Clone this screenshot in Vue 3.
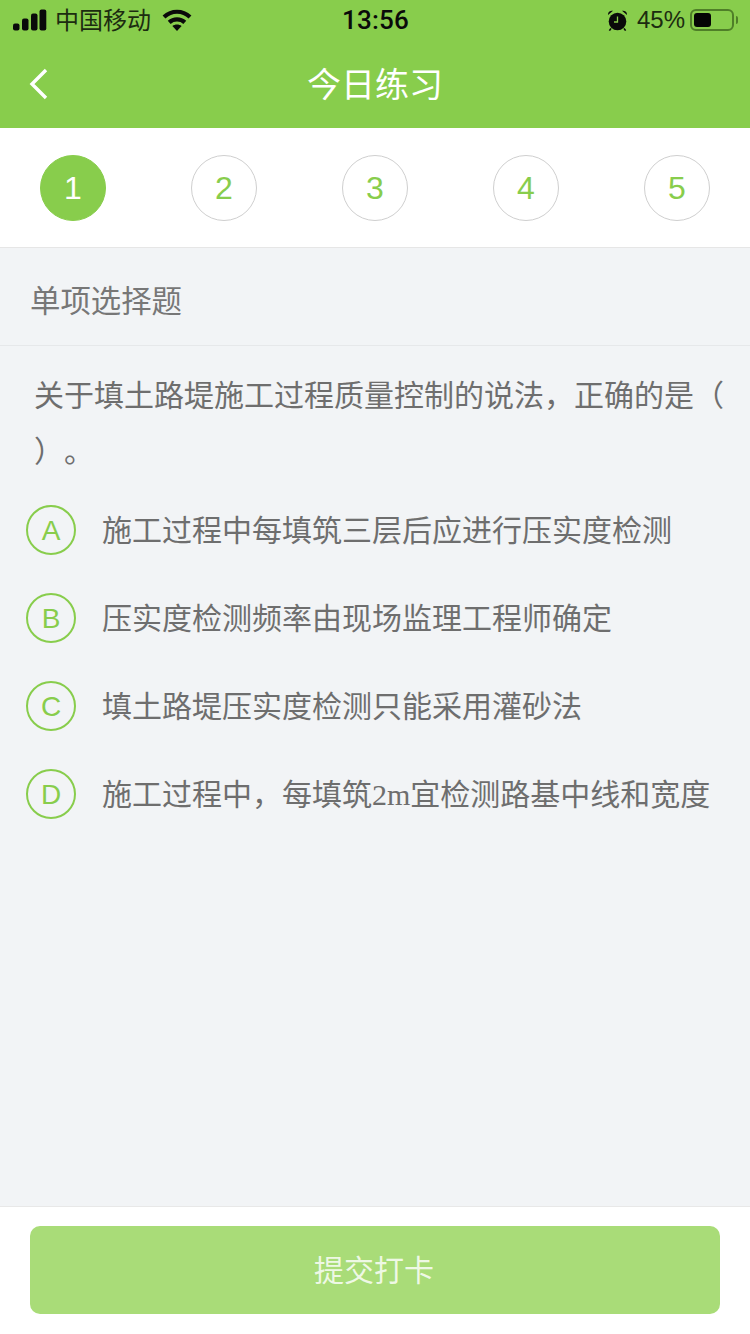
<template>
  <div class="page">
    <header class="top">
      <div class="status">
        <div class="status-left">
          <svg class="signal" width="34" height="22" viewBox="0 0 34 22" fill="#0a0a0a">
            <rect x="0" y="14.5" width="6.5" height="7" rx="2" />
            <rect x="9" y="9.5" width="6.5" height="12" rx="2" />
            <rect x="18" y="4.5" width="6.5" height="17" rx="2" />
            <rect x="26.5" y="0.5" width="6.8" height="21" rx="2" />
          </svg>
          <span class="carrier">中国移动</span>
          <svg class="wifi" width="30" height="22" viewBox="0 0 30 22" fill="none" stroke="#0a0a0a" stroke-width="4.2">
            <path d="M2 8 C9.5 1 20.5 1 28 8" />
            <path d="M7.2 13.4 C11.5 9.4 18.5 9.4 22.8 13.4" />
            <path d="M15 22 L10.4 17 C13 15 17 15 19.6 17 Z" fill="#0a0a0a" stroke="none" />
          </svg>
        </div>
        <span class="clock">13:56</span>
        <div class="status-right">
          <svg class="alarm" width="21" height="21" viewBox="0 0 21 21">
            <circle cx="10.5" cy="11.5" r="8.8" fill="#0a0a0a" />
            <path d="M1 5 A4 4 0 0 1 6 0.8 Z M20 5 A4 4 0 0 0 15 0.8 Z" fill="#0a0a0a" />
            <path d="M4 18.4 L2.4 20.6 M17 18.4 L18.6 20.6" stroke="#0a0a0a" stroke-width="1.6" />
            <path d="M10.5 6.5 V12 H7" stroke="#88cd4c" stroke-width="1.3" fill="none" />
          </svg>
          <span class="percent">45%</span>
          <div class="battery">
            <div class="battery-level"></div>
          </div>
          <div class="battery-cap"></div>
        </div>
      </div>
      <div class="nav">
        <svg class="back" width="20" height="32" viewBox="0 0 20 32" fill="none" stroke="#fff" stroke-width="3.4">
          <path d="M17 2 L3 16 L17 30" />
        </svg>
        <span class="title">今日练习</span>
      </div>
    </header>

    <div class="steps">
      <div v-for="n in 5" :key="n" class="step" :class="{ active: n === 1 }">{{ n }}</div>
    </div>

    <div class="type">单项选择题</div>

    <main class="body">
      <p class="question">关于填土路堤施工过程质量控制的说法，正确的是（<br />）。</p>
      <div v-for="opt in options" :key="opt.key" class="option">
        <span class="letter">{{ opt.key }}</span>
        <span class="option-text">{{ opt.text }}<span v-if="opt.unit" class="serif">{{ opt.unit }}</span>{{ opt.rest }}</span>
      </div>
    </main>

    <footer class="foot">
      <button class="submit">提交打卡</button>
    </footer>
  </div>
</template>

<script setup>
const options = [
  { key: 'A', text: '施工过程中每填筑三层后应进行压实度检测' },
  { key: 'B', text: '压实度检测频率由现场监理工程师确定' },
  { key: 'C', text: '填土路堤压实度检测只能采用灌砂法' },
  { key: 'D', text: '施工过程中，每填筑', unit: '2m', rest: '宜检测路基中线和宽度' }
]
</script>

<style>
html, body { margin: 0; background: #f2f4f6; }
</style>

<style scoped>
.page {
  width: 750px;
  height: 1334px;
  display: flex;
  flex-direction: column;
  background: #f2f4f6;
  font-family: "Liberation Sans", "Noto Sans CJK SC", sans-serif;
}

.top { height: 128px; background: #88cd4c; }
.status {
  height: 40px;
  display: grid;
  grid-template-columns: 1fr auto 1fr;
  align-items: center;
  padding: 0 12px 0 13px;
  color: #0a0a0a;
}
.status-left { display: flex; align-items: center; }
.carrier { font-size: 24px; margin-left: 8px; color: #1c2c10; padding-bottom: 4px; }
.wifi { margin-left: 11px; }
.clock {
  font-family: Roboto, "Liberation Sans", sans-serif;
  font-size: 26px;
  font-weight: 500;
  letter-spacing: 0.2px;
}
.status-right { display: flex; align-items: center; justify-content: flex-end; }
.percent { font-size: 24px; margin-left: 9px; color: #1c2c10; }
.battery {
  width: 44px;
  height: 22px;
  margin-left: 5px;
  box-sizing: border-box;
  border: 2px solid #4f7f28;
  border-radius: 6px;
  padding: 2px;
}
.battery-level { width: 17px; height: 14px; background: #050505; border-radius: 3px; }
.battery-cap { width: 2px; height: 8px; margin-left: 2px; background: #4f7f28; border-radius: 0 2px 2px 0; }

.nav {
  height: 88px;
  display: grid;
  grid-template-columns: 1fr auto 1fr;
  align-items: center;
  padding-left: 29px;
  padding-right: 29px;
}
.title { font-size: 34px; color: #fff; padding-bottom: 4px; }

.steps {
  height: 120px;
  box-sizing: border-box;
  display: flex;
  justify-content: space-between;
  align-items: center;
  padding: 0 40px;
  background: #fff;
  border-bottom: 1px solid #e6e6e6;
}
.step {
  width: 66px;
  height: 66px;
  box-sizing: border-box;
  padding-top: 1px;
  border: 1px solid #cfcfcf;
  border-radius: 50%;
  display: flex;
  align-items: center;
  justify-content: center;
  font-size: 32px;
  color: #88cd4c;
}
.step.active { background: #88cd4c; border-color: #88cd4c; color: #fff; }

.type {
  height: 98px;
  box-sizing: border-box;
  padding: 4px 0 0 30px;
  display: flex;
  align-items: center;
  font-size: 30.4px;
  color: #777;
  border-bottom: 1px solid #e6e8ea;
}

.body { flex: 1; padding: 22px 26px 0; }
.question {
  margin: 0 0 6px;
  padding: 0 0 0 8px;
  font-size: 30px;
  line-height: 56px;
  color: #6e6e6e;
  text-spacing-trim: space-all;
}
.option { height: 88px; display: flex; align-items: center; }
.letter {
  width: 50px;
  height: 50px;
  box-sizing: border-box;
  flex: none;
  border: 2px solid #88cd4c;
  border-radius: 50%;
  display: flex;
  align-items: center;
  justify-content: center;
  font-size: 28px;
  color: #88cd4c;
  padding-top: 2px;
}
.option-text {
  margin-left: 26px;
  padding-bottom: 4px;
  font-size: 30px;
  color: #6e6e6e;
  white-space: nowrap;
}
.serif { font-family: "Liberation Serif", serif; }

.foot {
  height: 128px;
  box-sizing: border-box;
  padding: 19px 30px 20px;
  background: #fff;
  border-top: 1px solid #e8e8e8;
}
.submit {
  display: block;
  width: 100%;
  height: 88px;
  padding: 0 2px 5px 0;
  border: 0;
  border-radius: 10px;
  background: #a9dc78;
  color: rgba(255, 255, 255, 0.82);
  font-family: inherit;
  font-size: 30px;
}
</style>
